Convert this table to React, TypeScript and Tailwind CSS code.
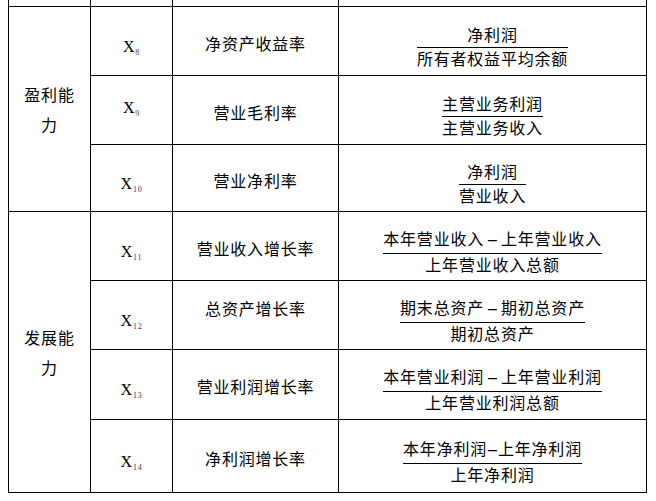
import React from 'react';

type Row = {
  x: string;
  name: string;
  num: React.ReactNode;
  den: string;
  h: string;
  xPos?: string;
  namePos?: string;
};

const cjk = { fontFamily: '"Noto Sans CJK SC", "Noto Sans", sans-serif' };

function Dash({ wide }: { wide?: boolean }) {
  return (
    <span
      className={wide ? 'mx-[4px] tracking-normal' : 'mx-[1px] tracking-normal'}
      style={{ fontFamily: '"Liberation Sans", sans-serif' }}
    >
      –
    </span>
  );
}

const profit: Row[] = [
  { x: '8', name: '净资产收益率', num: '净利润', den: '所有者权益平均余额', h: 'h-[69px]' },
  { x: '9', name: '营业毛利率', num: '主营业务利润', den: '主营业务收入', h: 'h-[69px]', xPos: '-translate-y-[4px]' },
  { x: '10', name: '营业净利率', num: '净利润', den: '营业收入', h: 'h-[67px]' },
];

const growth: Row[] = [
  {
    x: '11',
    name: '营业收入增长率',
    num: (
      <>
        本年营业收入<Dash wide />上年营业收入
      </>
    ),
    den: '上年营业收入总额',
    h: 'h-[69px]',
  },
  {
    x: '12',
    name: '总资产增长率',
    num: (
      <>
        期末总资产<Dash wide />期初总资产
      </>
    ),
    den: '期初总资产',
    h: 'h-[69px]',
    namePos: '-translate-y-[7px]',
  },
  {
    x: '13',
    name: '营业利润增长率',
    num: (
      <>
        本年营业利润<Dash wide />上年营业利润
      </>
    ),
    den: '上年营业利润总额',
    h: 'h-[70px]',
  },
  {
    x: '14',
    name: '净利润增长率',
    num: (
      <>
        本年净利润<Dash />上年净利润
      </>
    ),
    den: '上年净利润',
    h: 'h-[73px]',
  },
];

function Fraction({ num, den }: { num: React.ReactNode; den: string }) {
  return (
    <div className="inline-flex flex-col items-center translate-y-[4px]">
      <div className="leading-[20px] whitespace-nowrap">{num}</div>
      <div className="mt-[3px] h-px w-full bg-black" />
      <div className="leading-[20px] whitespace-nowrap">{den}</div>
    </div>
  );
}

function XLabel({ n, pos }: { n: string; pos?: string }) {
  return (
    <span
      className={`inline-flex items-end ${pos ?? 'translate-y-[4px]'}`}
      style={{ fontFamily: '"Liberation Serif", serif' }}
    >
      <span className="text-[16px] leading-none">X</span>
      <span className="text-[8px] leading-none text-[#4a3a5a] translate-y-[2px]">{n}</span>
    </span>
  );
}

function Group({ title, rows }: { title: [string, string]; rows: Row[] }) {
  return (
    <>
      {rows.map((r, i) => (
        <tr key={r.x} className={r.h}>
          {i === 0 && (
            <td rowSpan={rows.length} className="border border-black text-center align-middle">
              <div className="leading-[30px]">
                {title[0]}
                <br />
                {title[1]}
              </div>
            </td>
          )}
          <td className="border border-black text-center align-middle">
            <XLabel n={r.x} pos={r.xPos} />
          </td>
          <td className="border border-black text-center align-middle">
            <span className={`inline-block ${r.namePos ?? 'translate-y-[2px]'}`}>{r.name}</span>
          </td>
          <td className="border border-black text-center align-middle">
            <Fraction num={r.num} den={r.den} />
          </td>
        </tr>
      ))}
    </>
  );
}

export default function App() {
  return (
    <div className="w-[656px] h-[501px] bg-white overflow-hidden">
      <table
        className="ml-[8px] border-collapse table-fixed text-[16px] tracking-[0.8px] text-black"
        style={cjk}
      >
        <colgroup>
          <col className="w-[82px]" />
          <col className="w-[82px]" />
          <col className="w-[166px]" />
          <col className="w-[308px]" />
        </colgroup>
        <tbody>
          <tr className="h-[6px]">
            <td className="border border-t-0 border-black p-0" />
            <td className="border border-t-0 border-black p-0" />
            <td className="border border-t-0 border-black p-0" />
            <td className="border border-t-0 border-black p-0" />
          </tr>
          <Group title={['盈利能', '力']} rows={profit} />
          <Group title={['发展能', '力']} rows={growth} />
        </tbody>
      </table>
    </div>
  );
}
